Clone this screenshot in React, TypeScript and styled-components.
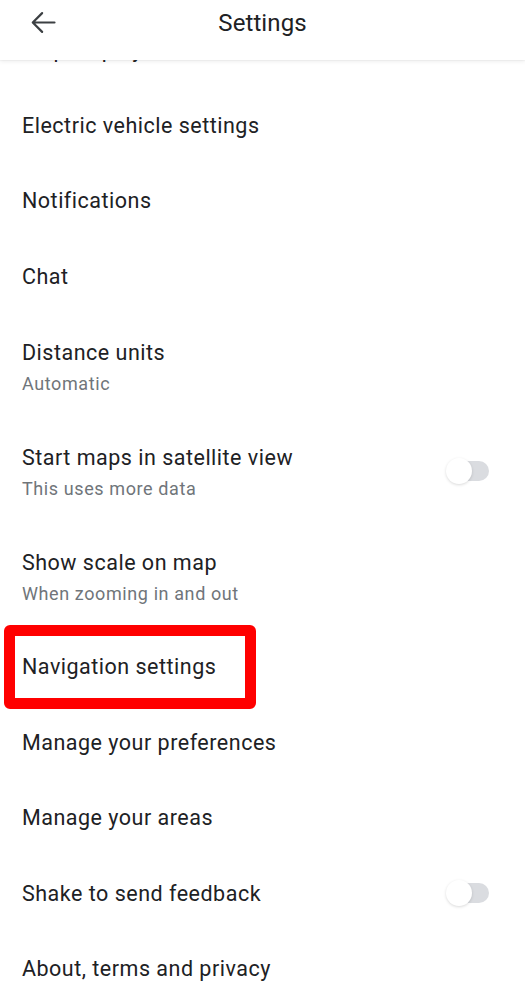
import React from "react";
import styled, { createGlobalStyle } from "styled-components";

const GlobalStyle = createGlobalStyle`
  html, body {
    margin: 0;
    padding: 0;
    background: #ffffff;
    font-family: Roboto, "Noto Sans", Arial, sans-serif;
    color: #202124;
  }
`;

interface SettingItem {
  title: string;
  subtitle?: string;
  toggle?: boolean;
  highlight?: boolean;
}

const items: SettingItem[] = [
  { title: "Map display" },
  { title: "Electric vehicle settings" },
  { title: "Notifications" },
  { title: "Chat" },
  { title: "Distance units", subtitle: "Automatic" },
  { title: "Start maps in satellite view", subtitle: "This uses more data", toggle: true },
  { title: "Show scale on map", subtitle: "When zooming in and out" },
  { title: "Navigation settings", highlight: true },
  { title: "Manage your preferences" },
  { title: "Manage your areas" },
  { title: "Shake to send feedback", toggle: true },
  { title: "About, terms and privacy" },
];

export default function App() {
  return (
    <>
      <GlobalStyle />
      <Screen>
        <Header>
          <BackButton aria-label="Back">
            <svg width="33" height="33" viewBox="0 0 24 24" fill="none">
              <path
                d="M20 12H4.6M11 5.2L4.2 12L11 18.8"
                stroke="#3c4043"
                strokeWidth="1.6"
                strokeLinecap="round"
                strokeLinejoin="round"
              />
            </svg>
          </BackButton>
          <Title>Settings</Title>
          <span />
        </Header>
        <List>
          {items.map((item) => (
            <Row key={item.title} $tall={!!item.subtitle}>
              <RowText>
                <RowTitle>{item.title}</RowTitle>
                {item.subtitle && <RowSubtitle>{item.subtitle}</RowSubtitle>}
              </RowText>
              {item.toggle && (
                <Switch>
                  <Thumb />
                </Switch>
              )}
              {item.highlight && <Highlight />}
            </Row>
          ))}
        </List>
      </Screen>
    </>
  );
}

const Screen = styled.div`
  width: 525px;
  height: 1000px;
  overflow: hidden;
  position: relative;
  background: #fff;
`;

const Header = styled.header`
  position: absolute;
  top: 0;
  left: 0;
  right: 0;
  z-index: 2;
  height: 60px;
  display: grid;
  grid-template-columns: 1fr auto 1fr;
  align-items: start;
  background: #ffffff;
  box-shadow: 0 2px 4px rgba(0, 0, 0, 0.06), 0 1px 1px rgba(0, 0, 0, 0.03);
`;

const BackButton = styled.button`
  justify-self: start;
  margin: 6px 0 0 27px;
  padding: 0;
  border: none;
  background: none;
  display: flex;
  align-items: center;
`;

const Title = styled.h1`
  margin: 7px 0 0;
  font-size: 24px;
  line-height: 32px;
  font-weight: 400;
  color: #202124;
  letter-spacing: 0.1px;
`;

const List = styled.div`
  display: flex;
  flex-direction: column;
  padding-top: 12.5px;
`;

const Row = styled.div<{ $tall: boolean }>`
  position: relative;
  height: ${(p) => (p.$tall ? "105px" : "75.5px")};
  display: flex;
  align-items: center;
  justify-content: space-between;
  padding: 0 36px 0 22px;
`;

const RowText = styled.div`
  display: flex;
  flex-direction: column;
  gap: 7px;
`;

const RowTitle = styled.div`
  font-size: 21.5px;
  line-height: 26px;
  letter-spacing: 0.5px;
  color: #202124;
`;

const RowSubtitle = styled.div`
  font-size: 18px;
  line-height: 22px;
  letter-spacing: 0.6px;
  color: #70757a;
`;

const Switch = styled.div`
  position: relative;
  width: 36px;
  height: 20px;
  border-radius: 10px;
  background: #dadce0;
  margin-top: -2px;
`;

const Thumb = styled.div`
  position: absolute;
  left: -7px;
  top: -3px;
  width: 26px;
  height: 26px;
  border-radius: 50%;
  background: #ffffff;
  box-shadow: 0 1px 3px rgba(0, 0, 0, 0.15);
`;

const Highlight = styled.div`
  position: absolute;
  left: 4px;
  top: -5px;
  width: 252px;
  height: 84px;
  box-sizing: border-box;
  border: 11px solid #ff0000;
  border-radius: 6px;
  pointer-events: none;
`;
